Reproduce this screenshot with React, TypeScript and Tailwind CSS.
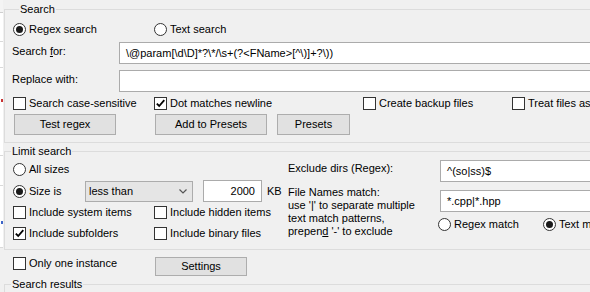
import React from 'react';

const Radio = ({ checked, label }: { checked?: boolean; label: string }) => (
  <div className="flex items-center h-4">
    <span className="flex items-center justify-center w-[13px] h-[13px] rounded-full border border-[#333] bg-white shrink-0">
      {checked && <span className="w-[7px] h-[7px] rounded-full bg-[#1a1a1a]" />}
    </span>
    <span className="ml-[3px] whitespace-nowrap">{label}</span>
  </div>
);

const Check = ({ checked, label }: { checked?: boolean; label: string }) => (
  <div className="flex items-center h-4">
    <span className="flex items-center justify-center w-[13px] h-[13px] border border-[#333] bg-white shrink-0">
      {checked && (
        <svg width="11" height="11" viewBox="0 0 11 11">
          <path d="M1.8 5.6 L4.2 8 L9.3 2.2" fill="none" stroke="#000" strokeWidth="1.8" />
        </svg>
      )}
    </span>
    <span className="ml-[3px] whitespace-nowrap">{label}</span>
  </div>
);

const Btn = ({ className, children }: { className: string; children: React.ReactNode }) => (
  <div className={`flex items-center justify-center border border-[#adadad] bg-[#e1e1e1] ${className}`}>{children}</div>
);

const Field = ({ className, children }: { className: string; children?: React.ReactNode }) => (
  <div className={`flex items-center h-[22px] border border-[#ababab] bg-white pl-[6px] whitespace-nowrap ${className}`}>{children}</div>
);

const Group = ({ title, className, children }: { title: string; className?: string; children?: React.ReactNode }) => (
  <fieldset className={`w-[640px] border border-[#dcdcdc] ${className ?? ''}`}>
    <legend className="ml-[6px] px-[1px] leading-[16px]">{title}</legend>
    {children}
  </fieldset>
);

export default function App() {
  return (
    <div className="flex w-[590px] h-[292px] overflow-hidden bg-[#f0f0f0] text-black text-[11px] font-['Liberation_Sans',Arial,sans-serif]">
      {/* window behind, peeking out at the left edge */}
      <div className="flex flex-col w-[3px] shrink-0">
        <div className="h-[13px] bg-[#f4f4f4] border-b border-[#cfcfcf]" />
        <div className="h-[29px] bg-white border-b border-[#d9d9d9]" />
        <div className="h-[26px] bg-white border-b border-[#d9d9d9]" />
        <div className="h-[31px] bg-white" />
        <div className="h-[3px] bg-white border-r-2 border-[#c83232]" />
        <div className="h-[54px] bg-white border-b border-[#d9d9d9]" />
        <div className="h-[30px] bg-white border-b border-[#d9d9d9]" />
        <div className="h-[35px] bg-white" />
        <div className="h-[3px] bg-white border-r-2 border-[#3c64c8]" />
        <div className="h-[24px] bg-white border-b border-[#d9d9d9]" />
        <div className="flex-1" />
      </div>

      <div className="flex flex-col ml-[1px] pt-[1px] min-w-0">
        <Group title="Search" className="pl-[8px] pb-[7px]">
          <div className="flex mt-[4px] h-4">
            <div className="w-[141px]"><Radio checked label="Regex search" /></div>
            <Radio label="Text search" />
          </div>
          <div className="flex items-start mt-[5px]">
            <div className="w-[107px] -ml-px mt-[1px] leading-[16px]">Search <u>f</u>or:</div>
            <Field className="flex-1">{'\\@param[\\d\\D]*?\\*/\\s+(?<FName>[^\\)]+?\\))'}</Field>
          </div>
          <div className="flex items-start mt-[6px]">
            <div className="w-[107px] -ml-px mt-[1px] leading-[16px]">Replace with:</div>
            <Field className="flex-1" />
          </div>
          <div className="flex mt-[3px] h-4">
            <div className="w-[141px]"><Check label="Search case-sensitive" /></div>
            <div className="w-[209px]"><Check checked label="Dot matches newline" /></div>
            <div className="w-[149px]"><Check label="Create backup files" /></div>
            <Check label="Treat files as binary" />
          </div>
          <div className="flex mt-[3px] h-[21px]">
            <Btn className="ml-[1px] w-[102px]">Test regex</Btn>
            <Btn className="ml-[39px] w-[112px]">Add to Presets</Btn>
            <Btn className="ml-[10px] w-[73px]">Presets</Btn>
          </div>
        </Group>

        <Group title="Limit search">
          <div className="flex items-start">
            <div className="w-[283px] pl-[8px] pb-[8px] shrink-0">
              <div className="mt-[2px]"><Radio label="All sizes" /></div>
              <div className="flex items-center mt-[3px] h-[22px]">
                <div className="w-[72px]"><Radio checked label="Size is" /></div>
                <div className="flex items-center justify-between w-[108px] h-[21px] border border-[#acacac] bg-[#e5e5e5] pl-[3px] pr-[5px]">
                  <span>less than</span>
                  <svg width="8" height="5" viewBox="0 0 8 5">
                    <path d="M0.5 0.5 L4 4 L7.5 0.5" fill="none" stroke="#555" strokeWidth="1.2" />
                  </svg>
                </div>
                <Field className="ml-[10px] w-[59px] justify-end pr-[6px]">2000</Field>
                <span className="ml-[5px]">KB</span>
              </div>
              <div className="flex mt-[2px] h-4">
                <div className="w-[141px]"><Check label="Include system items" /></div>
                <Check label="Include hidden items" />
              </div>
              <div className="flex mt-[5px] h-4">
                <div className="w-[141px]"><Check checked label="Include subfolders" /></div>
                <Check label="Include binary files" />
              </div>
            </div>

            <div className="flex-1 min-w-0">
              <div className="flex items-start mt-[1px]">
                <div className="w-[152px] leading-[16px]">Exclude dirs (Regex):</div>
                <Field className="flex-1">^(so|ss)$</Field>
              </div>
              <div className="flex items-start mt-[4px]">
                <div className="w-[152px] leading-[13px]">
                  <div>File Names match:</div>
                  <div>use '|' to separate multiple</div>
                  <div>text match patterns,</div>
                  <div>prepen<u>d</u> '-' to exclude</div>
                </div>
                <div className="flex-1">
                  <Field className="mt-[4px]">*.cpp|*.hpp</Field>
                  <div className="flex mt-[4px] -ml-[2px] h-4">
                    <div className="w-[105px]"><Radio label="Regex match" /></div>
                    <Radio checked label="Text match" />
                  </div>
                </div>
              </div>
            </div>
          </div>
        </Group>

        <div className="flex items-start h-[26px] pl-[9px] shrink-0">
          <div className="w-[142px] mt-[5px]"><Check label="Only one instance" /></div>
          <Btn className="mt-[7px] w-[92px] h-[19px]">Settings</Btn>
        </div>

        <Group title="Search results" className="h-[40px] shrink-0" />
      </div>
    </div>
  );
}
